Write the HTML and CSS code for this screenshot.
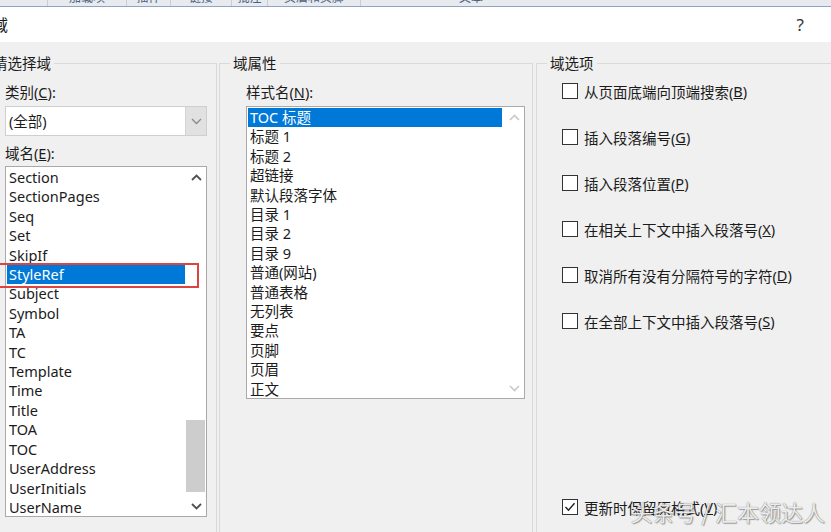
FILE: index.html
```html
<!DOCTYPE html>
<html lang="zh-CN">
<head>
    <meta charset="UTF-8">
    <meta name="viewport" content="width=device-width, initial-scale=1.0">
    <title>域</title>
    <link rel="stylesheet" href="styles.css">
</head>
<body>
    <div class="ribbon">
        <span class="tab tab-a"></span>
        <span class="tab tab-b">加载项</span>
        <span class="tab tab-c">插件</span>
        <span class="tab tab-d">链接</span>
        <span class="tab tab-e">批注</span>
        <span class="tab tab-f">页眉和页脚</span>
        <span class="tab tab-g">文本</span>
    </div>

    <div class="titlebar">
        <span class="title">域</span>
        <span class="help">?</span>
    </div>

    <div class="panel">
        <!-- 左侧：请选择域 -->
        <fieldset class="group group-select">
            <legend>请选择域</legend>
            <div class="group-body">
                <div class="label label-first">类别(<u>C</u>):</div>
                <div class="combo">
                    <span class="combo-text">(全部)</span>
                    <span class="combo-btn">
                        <svg width="11" height="7" viewBox="0 0 11 7"><polyline points="1,1 5.5,5.5 10,1" fill="none" stroke="#8a8a8a" stroke-width="1.3"/></svg>
                    </span>
                </div>
                <div class="label label-second">域名(<u>E</u>):</div>
                <div class="listbox listbox-fields">
                    <ul class="items">
                        <li>Section</li>
                        <li>SectionPages</li>
                        <li>Seq</li>
                        <li>Set</li>
                        <li>SkipIf</li>
                        <li class="selected marked">StyleRef</li>
                        <li>Subject</li>
                        <li>Symbol</li>
                        <li>TA</li>
                        <li>TC</li>
                        <li>Template</li>
                        <li>Time</li>
                        <li>Title</li>
                        <li>TOA</li>
                        <li>TOC</li>
                        <li>UserAddress</li>
                        <li>UserInitials</li>
                        <li>UserName</li>
                    </ul>
                    <div class="scrollbar">
                        <span class="arrow">
                            <svg width="11" height="7" viewBox="0 0 11 7"><polyline points="1,6 5.5,1.5 10,6" fill="none" stroke="#505050" stroke-width="1.8"/></svg>
                        </span>
                        <div class="track"><div class="thumb thumb-fields"></div></div>
                        <span class="arrow">
                            <svg width="11" height="7" viewBox="0 0 11 7"><polyline points="1,1 5.5,5.5 10,1" fill="none" stroke="#505050" stroke-width="1.8"/></svg>
                        </span>
                    </div>
                </div>
            </div>
        </fieldset>

        <!-- 中间：域属性 -->
        <fieldset class="group group-props">
            <legend>域属性</legend>
            <div class="group-body">
                <div class="label label-first">样式名(<u>N</u>):</div>
                <div class="listbox listbox-styles">
                    <ul class="items">
                        <li class="selected">TOC 标题</li>
                        <li>标题 1</li>
                        <li>标题 2</li>
                        <li>超链接</li>
                        <li>默认段落字体</li>
                        <li>目录 1</li>
                        <li>目录 2</li>
                        <li>目录 9</li>
                        <li>普通(网站)</li>
                        <li>普通表格</li>
                        <li>无列表</li>
                        <li>要点</li>
                        <li>页脚</li>
                        <li>页眉</li>
                        <li>正文</li>
                    </ul>
                    <div class="scrollbar">
                        <span class="arrow">
                            <svg width="11" height="7" viewBox="0 0 11 7"><polyline points="1,6 5.5,1.5 10,6" fill="none" stroke="#c9c9c9" stroke-width="1.6"/></svg>
                        </span>
                        <div class="track"></div>
                        <span class="arrow">
                            <svg width="11" height="7" viewBox="0 0 11 7"><polyline points="1,1 5.5,5.5 10,1" fill="none" stroke="#c9c9c9" stroke-width="1.6"/></svg>
                        </span>
                    </div>
                </div>
            </div>
        </fieldset>

        <!-- 右侧：域选项 -->
        <fieldset class="group group-options">
            <legend>域选项</legend>
            <div class="group-body">
                <label class="check"><span class="box"></span>从页面底端向顶端搜索(<u>B</u>)</label>
                <label class="check"><span class="box"></span>插入段落编号(<u>G</u>)</label>
                <label class="check"><span class="box"></span>插入段落位置(<u>P</u>)</label>
                <label class="check"><span class="box"></span>在相关上下文中插入段落号(<u>X</u>)</label>
                <label class="check"><span class="box"></span>取消所有没有分隔符号的字符(<u>D</u>)</label>
                <label class="check"><span class="box"></span>在全部上下文中插入段落号(<u>S</u>)</label>
                <label class="check check-keep">
                    <span class="box">
                        <svg width="14" height="14" viewBox="0 0 14 14"><polyline points="2.5,7 5.5,10.2 11.5,3.2" fill="none" stroke="#222" stroke-width="1.4"/></svg>
                    </span>更新时保留原格式(<u>V</u>)
                </label>
            </div>
        </fieldset>
    </div>

    <div class="watermark">头条号 / 汇本领达人</div>
</body>
</html>
```

FILE: styles.css
```css
body{
    margin: 0;
    width: 831px;
    height: 532px;
    overflow: hidden;
    background-color: #f0f0f0;
    color: #1b1b1b;
    font-family: "Noto Sans", "Noto Sans CJK SC", sans-serif;
    font-size: 14.5px;
}

/* 对话框后面露出的功能区 */
.ribbon{
    display: flex;
    height: 6px;
    overflow: hidden;
    background-color: #e7eaee;
    border-bottom: 1px solid #8ea4c2;
}
.tab{
    display: block;
    margin-top: -9px;
    font-size: 12px;
    line-height: 14px;
    color: #4d6383;
    text-align: center;
    border-right: 1px solid #c8ced8;
}
.tab-a{ width: 47px; }
.tab-b{ width: 78px; }
.tab-c{ width: 43px; }
.tab-d{ width: 60px; }
.tab-e{ width: 35px; }
.tab-f{ width: 92px; }
.tab-g{ width: 220px; border-right: none; }

.titlebar{
    display: flex;
    justify-content: space-between;
    align-items: center;
    height: 35px;
    background-color: #fff;
}
.title{
    margin-left: -8px;
    margin-top: -2px;
    font-size: 16px;
}
.help{
    margin-right: 27px;
    font-size: 17px;
    color: #333;
}

.panel{
    display: flex;
    padding-top: 11px;
}

.group{
    box-sizing: border-box;
    height: 500px;
    margin: 0;
    padding: 0;
    border: 1px solid #d9d9d9;
    min-width: 0;
}
.group legend{
    margin-left: 10px;
    padding: 0 3px;
    line-height: 20px;
}
.group-select{
    width: 238px;
    margin-left: -21px;
}
.group-select .group-body{
    padding: 0 9px 0 25px;
}
.group-props{
    width: 314px;
    margin-left: 2px;
}
.group-props .group-body{
    padding: 0 7px 0 26px;
}
.group-options{
    flex: 1;
    margin-left: 3px;
    margin-right: -20px;
}
.group-options .group-body{
    display: flex;
    flex-direction: column;
    padding-left: 25px;
}

.label{
    line-height: 20px;
}
.label-first{
    margin-top: 9px;
}
.label-second{
    margin-top: 7px;
}

.combo{
    display: flex;
    box-sizing: border-box;
    height: 30px;
    margin-top: 4px;
    background-color: #fff;
    border: 1px solid #cfcfcf;
}
.combo-text{
    flex: 1;
    padding-left: 3px;
    line-height: 28px;
}
.combo-btn{
    display: flex;
    align-items: center;
    justify-content: center;
    width: 20px;
    background-color: #e1e1e1;
    border-left: 1px solid #d4d4d4;
}

.listbox{
    display: flex;
    box-sizing: border-box;
    background-color: #fff;
    border: 1px solid #a9a9a9;
}
.listbox-fields{
    height: 351px;
    margin-top: 3px;
}
.listbox-styles{
    height: 293px;
    margin-top: 4px;
}
.items{
    flex: 1;
    list-style: none;
    margin: 1px 1px 0 1px;
    padding: 0;
}
.items li{
    padding-left: 2px;
    line-height: 19.4px;
    white-space: nowrap;
}
.items li.selected{
    background-color: #0078d7;
    color: #fff;
}
.listbox-styles .items li.selected{
    margin-right: 1px;
}
.items li.marked{
    position: relative;
}
.items li.marked::after{
    content: "";
    position: absolute;
    left: -9px;
    top: -2px;
    right: -14px;
    bottom: -4px;
    border: 2px solid #dc4442;
}

.scrollbar{
    display: flex;
    flex-direction: column;
    width: 20px;
}
.arrow{
    display: flex;
    align-items: center;
    justify-content: center;
    height: 20px;
}
.track{
    flex: 1;
}
.thumb{
    margin: 0 1px 0 0;
    background-color: #cdcdcd;
}
.thumb-fields{
    margin-top: 233px;
    height: 72px;
}

.check{
    display: flex;
    align-items: center;
    height: 22px;
    margin-top: 24px;
}
.check:first-child{
    margin-top: 7px;
}
.check .box{
    display: flex;
    align-items: center;
    justify-content: center;
    box-sizing: border-box;
    width: 16px;
    height: 16px;
    margin-right: 6px;
    background-color: #fff;
    border: 1px solid #333;
}
.check-keep{
    margin-top: 164px;
}

.watermark{
    position: absolute;
    right: 6px;
    bottom: 5px;
    font-family: "Noto Sans CJK SC", sans-serif;
    font-size: 22px;
    color: rgba(255, 255, 255, 0.9);
    text-shadow: 0 0 1px rgba(60, 60, 60, 0.8), 1px 1px 1px rgba(90, 90, 90, 0.5);
}
```
